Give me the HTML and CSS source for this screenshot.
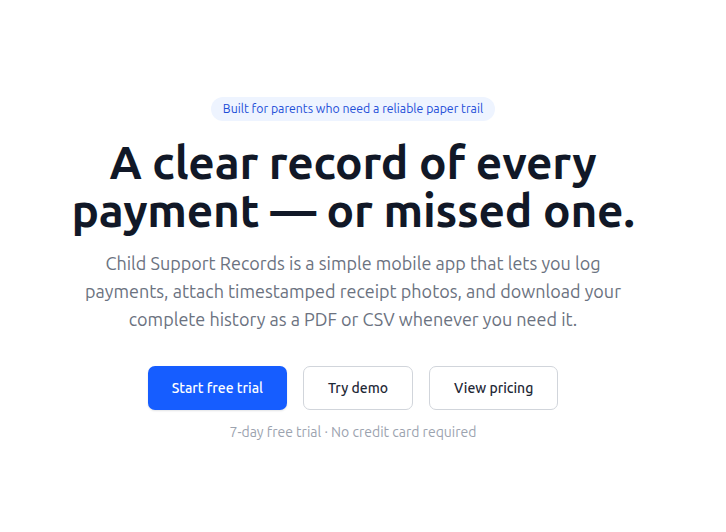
FILE: index.html
```html
<!DOCTYPE html>
<html lang="en">
<head>
<meta charset="utf-8">
<title>Child Support Records</title>
<link rel="stylesheet" href="styles.css">
</head>
<body>
<main class="hero">
  <span class="badge">Built for parents who need a reliable paper trail</span>
  <h1 class="title">A clear record of every payment — or missed one.</h1>
  <p class="lead">Child Support Records is a simple mobile app that lets you log payments, attach timestamped receipt photos, and download your complete history as a PDF or CSV whenever you need it.</p>
  <div class="actions">
    <a class="btn btn-primary" href="#">Start free trial</a>
    <a class="btn btn-outline" href="#">Try demo</a>
    <a class="btn btn-outline" href="#">View pricing</a>
  </div>
  <p class="note">7-day free trial · No credit card required</p>
</main>
</body>
</html>
```

FILE: styles.css
```css
* { box-sizing: border-box; }

html, body {
  margin: 0;
  background: #ffffff;
}

body {
  font-family: Ubuntu, "Open Sans", "Noto Sans", sans-serif;
  color: #111827;
}

.hero {
  display: flex;
  flex-direction: column;
  align-items: center;
  text-align: center;
  padding: 97px 20px 0 0;
}

.badge {
  display: inline-block;
  background: #eef4ff;
  color: #1d4ed8;
  font-size: 12.3px;
  line-height: 24px;
  padding: 0 12px;
  border-radius: 999px;
}

.title {
  margin: 17px 0 0;
  max-width: 620px;
  font-size: 46px;
  line-height: 48px;
  font-weight: 700;
  letter-spacing: -0.2px;
  color: #111827;
}

.lead {
  margin: 15px 0 0;
  max-width: 560px;
  font-size: 18px;
  line-height: 28px;
  color: #6b7280;
}

.actions {
  display: flex;
  gap: 16px;
  margin-top: 33px;
}

.btn {
  display: inline-flex;
  align-items: center;
  justify-content: center;
  height: 44px;
  padding: 0 24px;
  border-radius: 7px;
  font-size: 14px;
  font-weight: 500;
  text-decoration: none;
}

.btn-primary {
  background: #165dff;
  color: #ffffff;
  box-shadow: 0 1px 2px rgba(17, 24, 39, 0.12);
}

.btn-outline {
  background: #ffffff;
  color: #1f2937;
  border: 1px solid #d1d5db;
}

.note {
  margin: 12px 0 0;
  font-size: 14px;
  line-height: 20px;
  color: #9ca3af;
}
```
